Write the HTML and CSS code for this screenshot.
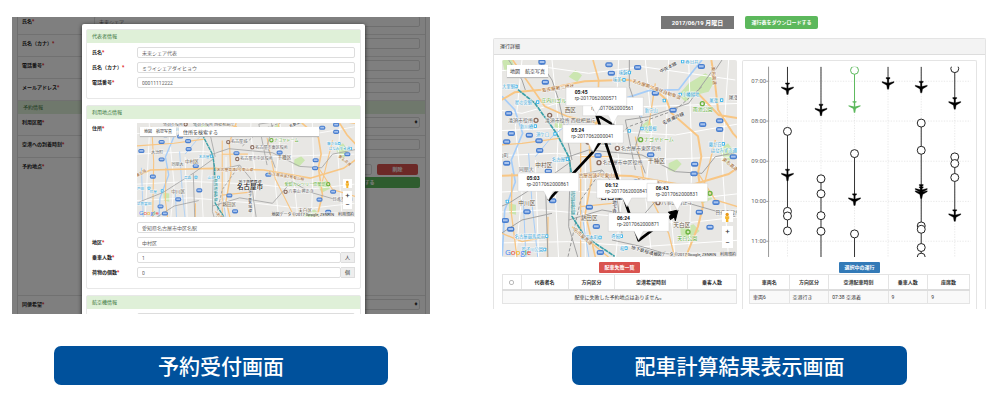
FILE: index.html
```html
<!DOCTYPE html>
<html lang="ja">
<head>
<meta charset="utf-8">
<title>予約受付・配車計算結果</title>
<link rel="stylesheet" href="styles.css">
</head>
<body>
<svg class="defs" aria-hidden="true">
  <defs>
    <g id="shield"><rect x="-11" y="-7" width="22" height="15" rx="6" fill="#4a7fcf"/><rect x="-7" y="-3" width="14" height="6" fill="#a9c4ee"/></g>
    <g id="stop"><rect x="-5" y="-6" width="10" height="11" rx="2" fill="#45b9ec"/><rect x="-2" y="-3" width="4" height="5" fill="#fff"/></g>
    <g id="poi"><circle r="6" fill="none" stroke="#8a6a5c" stroke-width="4"/></g>
    <g id="park"><circle r="6" fill="none" stroke="#6cb33f" stroke-width="4"/></g>
    <g id="plane"><path d="M-6-17H6V-14L2-12V-1L18-5V-2L4 6 2 18H-2L-4 6-18-2V-5L-2-1V-12L-6-14Z"/></g>
    <g id="map">
      <rect x="-80" y="-10" width="820" height="620" fill="#e8e7e4"/>
      <g fill="#cbe6b0">
        <path d="M560 70l50-30 30 20-20 35-40 10-30 20-20-20z"/><path d="M420 195l20-15 15 20-20 22z"/>
        <path d="M500 310l25-12 14 14-22 24-18-6z"/><path d="M580 395l40-8 10 30-30 14z"/>
        <path d="M535 505l40-12 18 20-30 24-26-8z"/><path d="M200 50l20-20 20 16-14 20z"/><path d="M20 430l22 4v30l-20-4z"/>
        <path d="M650 270l28-20 20 26-22 40z"/><path d="M158 180l24 4-4 24-20-6z"/><path d="M0 0l30 0 8 24-30 10z"/>
      </g>
      <g fill="none" stroke="#fff" stroke-width="3">
        <path d="M-80 40L120 20 260 40 420 20 700 60M-80 140L60 160 200 120 420 140 720 130M-80 215L160 205 340 215 520 225 720 190M-80 290L160 280 400 300 720 290M-80 400L120 390 360 400 540 420 720 400M-80 460L120 450 360 470 540 490 720 470M-80 550L200 545 420 560 720 540"/>
        <path d="M-40 0L-30 200-50 600M60 0L40 200 60 400 40 600M100 300L110 600M150 0L170 200 160 400 170 600M250 300V600M350 0L340 200 360 400 340 600M430 0L450 200 430 400 450 600M500 0L490 300 520 600M560 0L570 300 560 600M680 0L660 300 680 600"/>
      </g>
      <g fill="none" stroke="#a6cdf8" stroke-width="5">
        <path d="M0 109L38 149 62 220 28 300 40 366 8 451 0 600"/>
        <path d="M358 119L440 92 530 89 568 40 600 0M370 130L420 170"/>
        <path d="M80 280L90 430 108 600M64 420L72 600M238 450L262 600M-60 340L-50 600" stroke-width="3"/>
        <path d="M100 290L150 230 200 190" stroke-width="3"/>
      </g>
      <g fill="none" stroke="#f8c684" stroke-width="6">
        <path d="M-80 140L0 119 38 97 118 89 248 64 378 59 448 79 493 119 508 159 588 229 598 290 588 339 603 439 588 499 548 600"/>
        <path d="M273 0L290 60 286 180 262 250 268 360 250 460 282 600" stroke-width="5"/>
        <path d="M236 240V600M236 290H330M236 440L330 430" stroke-width="4"/>
        <path d="M628 0L638 60 648 149 693 220 740 270M588 100L650 165 740 180"/>
        <path d="M32 0L128 139 198 170 290 190" stroke-width="5"/>
        <path d="M-80 372L-27 348 205 342 388 348 558 378 680 342 740 300"/>
        <path d="M-22 190L-15 320-20 600M30 340L28 460 46 600M138 470L136 600M0 520L60 545 136 530" stroke-width="4"/>
        <path d="M210 500L330 600M400 230L430 380 500 520 520 600M460 70L440 200" stroke-width="4"/>
        <path d="M-80 260L60 250 170 235M640 240L600 400M588 339L640 420 740 450" stroke-width="4"/>
      </g>
      <g fill="none" stroke="#a3a3a3" stroke-width="3">
        <path d="M20 0L60 60 70 90M110 0L150 60 170 120 210 300M382 0V80L420 190 400 260 430 340M640 30L660 0"/>
        <path d="M170 300L260 270 420 285 520 335 600 340 640 290 740 270M208 350L300 330 340 380 360 520"/>
        <path d="M-80 470L20 430 130 360 200 310M200 480L300 450 420 470 490 390 560 430 700 470"/>
        <path d="M205 300L200 500 230 600M400 330L370 180 440 170 560 130 640 20M330 540L420 560 520 590"/>
        <path d="M130 360L138 600M-80 570L60 480 150 460"/>
      </g>
      <path d="M198 590L236 420 300 330M310 260L380 200 520 150 600 80" fill="none" stroke="#999" stroke-width="3" stroke-dasharray="10 6"/>
      <path d="M48 89L98 129 163 219 200 290 208 339 210 469 248 529 338 589" fill="none" stroke="#3ba0a8" stroke-width="5" stroke-dasharray="14 2"/>
      <g>
        <use href="#shield" x="321" y="14"/><use href="#shield" x="328" y="39"/><use href="#shield" x="407" y="22"/><use href="#shield" x="598" y="19"/>
        <use href="#shield" x="130" y="66"/><use href="#shield" x="460" y="99"/><use href="#shield" x="513" y="150"/><use href="#shield" x="20" y="160"/>
        <use href="#shield" x="28" y="220"/><use href="#shield" x="14" y="245"/><use href="#shield" x="82" y="225"/><use href="#shield" x="111" y="242"/><use href="#shield" x="113" y="271"/>
        <use href="#shield" x="14" y="309"/><use href="#shield" x="288" y="286"/><use href="#shield" x="446" y="284"/><use href="#shield" x="578" y="312"/><use href="#shield" x="576" y="341"/>
        <use href="#shield" x="602" y="193"/><use href="#shield" x="653" y="182"/><use href="#shield" x="653" y="208"/><use href="#shield" x="694" y="290"/><use href="#shield" x="405" y="365"/>
        <use href="#shield" x="-18" y="372"/><use href="#shield" x="139" y="333"/><use href="#shield" x="152" y="422"/><use href="#shield" x="75" y="455"/><use href="#shield" x="262" y="441"/>
        <use href="#shield" x="10" y="481"/><use href="#shield" x="26" y="507"/><use href="#shield" x="283" y="499"/><use href="#shield" x="295" y="577"/><use href="#shield" x="592" y="456"/>
        <use href="#shield" x="642" y="427"/><use href="#shield" x="624" y="501"/><use href="#shield" x="-60" y="278"/><use href="#shield" x="120" y="6"/>
        <use href="#stop" x="42" y="80"/><use href="#stop" x="107" y="127"/><use href="#stop" x="382" y="38"/><use href="#stop" x="366" y="60"/><use href="#stop" x="542" y="5"/>
        <use href="#stop" x="487" y="122"/><use href="#stop" x="535" y="104"/><use href="#stop" x="659" y="121"/><use href="#stop" x="420" y="206"/><use href="#stop" x="382" y="213"/>
        <use href="#stop" x="159" y="222"/><use href="#stop" x="100" y="199"/><use href="#stop" x="196" y="298"/><use href="#stop" x="222" y="375"/><use href="#stop" x="140" y="375"/>
        <use href="#stop" x="16" y="425"/><use href="#stop" x="134" y="529"/><use href="#stop" x="128" y="569"/><use href="#stop" x="294" y="533"/><use href="#stop" x="358" y="529"/>
        <use href="#stop" x="372" y="565"/><use href="#stop" x="664" y="252"/><use href="#stop" x="706" y="270"/><use href="#stop" x="-32" y="415"/>
        <use href="#poi" x="102" y="181"/><use href="#poi" x="143" y="166"/><use href="#poi" x="346" y="265"/><use href="#poi" x="291" y="308"/><use href="#poi" x="258" y="246"/><use href="#poi" x="468" y="428"/>
        <use href="#park" x="601" y="131"/><use href="#park" x="416" y="239"/><use href="#park" x="624" y="400"/><use href="#park" x="558" y="516"/>
      </g>
      <g class="map-label">
        <g fill="#6b5a45" font-size="17">
          <text x="188" y="156">西区</text><text x="100" y="321">中村区</text><text x="49" y="434">中川区</text><text x="438" y="309">千種区</text>
          <text x="514" y="502">天白区</text><text x="236" y="479">熱田区</text>
        </g>
        <g fill="#666" font-size="15">
          <text x="18" y="186">清須市役所</text><text x="128" y="187">清須市役所 西枇杷島庁</text><text x="357" y="270">名古屋市東区役所</text><text x="302" y="313">名古屋市中区役所</text>
          <text x="268" y="251">名古屋城</text><text x="50" y="334">同朋大</text><text x="-25" y="291">大治町</text><text x="478" y="433">八事山 興正寺</text><text x="640" y="462">日進市役所</text><text x="680" y="117">尾張旭市</text>
        </g>
        <g fill="#5fae3a" font-size="15">
          <text x="118" y="127">庄内川ゴルフ</text><text x="426" y="244">ナゴヤドーム</text><text x="572" y="153">雨池公園</text><text x="464" y="405">愛知カンツリー倶楽部</text><text x="526" y="539">天白公園</text>
        </g>
        <g fill="#39a9dc" font-size="13">
          <text x="0" y="85">大里駅</text><text x="38" y="133">星の宮駅</text><text x="350" y="42">味鋺</text><text x="332" y="64">味美</text><text x="550" y="10">春日井</text><text x="540" y="109">小幡緑地</text>
          <text x="428" y="156">新守山</text><text x="425" y="211">大曽根</text><text x="54" y="204">新川橋</text><text x="102" y="227">須ケ口</text><text x="150" y="303">名古屋</text><text x="182" y="380">山王</text>
          <text x="96" y="380">烏森</text><text x="38" y="534">名古屋競馬場前</text><text x="58" y="573">荒子川公園</text><text x="236" y="538">堀田本町</text><text x="328" y="534">呼続</text><text x="354" y="570">桜</text>
          <text x="620" y="257">藤が丘</text><text x="626" y="275">はなみずき通</text><text x="-76" y="420">戸田</text><text x="-30" y="434">伏屋</text><text x="-76" y="476">近鉄富田</text><text x="622" y="126">尾張</text>
        </g>
        <g fill="#a0672e" font-size="14">
          <text x="120" y="96" transform="rotate(-8 120 96)">名古屋第二環状</text><text x="390" y="66" transform="rotate(20 390 66)">名古屋第二環状自動車道</text>
          <text x="216" y="350">名古屋高速2号東山線</text><text x="404" y="364" transform="rotate(10 404 364)">名古屋高速2号東山線</text>
          <text x="628" y="20" transform="rotate(84 628 20)">東名高速</text><text x="660" y="300" transform="rotate(38 660 300)">東名高速</text><text x="-76" y="374" transform="rotate(-30 -76 374)">東名阪</text>
          <text x="214" y="510" transform="rotate(42 214 510)">名古屋高速</text>
        </g>
        <g fill="#333" font-size="14">
          <text x="476" y="40" transform="rotate(-28 476 40)">中央本線</text><text x="484" y="194" transform="rotate(-24 484 194)">名鉄瀬戸線</text><text x="338" y="420" writing-mode="tb">地下鉄名城線</text>
          <text x="296" y="396">地下鉄鶴舞線</text><text x="386" y="566" transform="rotate(16 386 566)">地下鉄桜通線</text>
        </g>
        <text x="213" y="380" writing-mode="tb" fill="#208a92" font-size="14">東海道新幹線</text>
        <text x="290" y="418" fill="#222" font-size="24" font-weight="500">名古屋市</text>
      </g>
    </g>
  </defs>
</svg>

<main class="page">
  <figure class="figure">
    <div class="booking">
      <form class="behind">
        <div class="row"><label for="b1">氏名<b>*</b></label><input id="b1" value="未来シェア"></div>
        <div class="row"><label for="b2">氏名（カナ）<b>*</b></label><input id="b2"></div>
        <div class="row"><label for="b3">電話番号<b>*</b></label><input id="b3"></div>
        <div class="row"><label for="b4">メールアドレス<b>*</b></label><input id="b4"></div>
        <h2 class="bar">予約情報</h2>
        <div class="row"><label for="b5">利用区間<b>*</b></label><span class="select-wrap"><select id="b5"><option></option></select></span></div>
        <div class="row"><label for="b6">空港への到着時刻<b>*</b></label><input id="b6"></div>
        <div class="row place">
          <label for="b7">予約地点<b>*</b></label>
          <div class="place-box">
            <div class="place-line"><input id="b7"><button type="button" class="remove">削除</button></div>
            <button type="button" class="add">予約地点を追加する</button>
          </div>
        </div>
        <div class="row last"><label for="b8">同便希望<b>*</b></label><span class="select-wrap"><select id="b8"><option></option></select></span></div>
      </form>
      <div class="shade"></div>
      <form class="modal">
        <section class="card">
          <h2 class="bar">代表者情報</h2>
          <div class="fields">
            <label for="m1">氏名<b>*</b></label><input id="m1" value="未来シェア代表">
            <label for="m2">氏名（カナ）<b>*</b></label><input id="m2" value="ミライシェアダイヒョウ">
            <label for="m3">電話番号<b>*</b></label><input id="m3" value="00011112222">
          </div>
        </section>
        <section class="card">
          <h2 class="bar">利用地点情報</h2>
          <div class="fields">
            <label for="m4">住所<b>*</b></label>
            <div>
              <div class="map map-small">
                <svg viewBox="-76 176 798 345" role="img" aria-label="地図"><use href="#map"/></svg>
                <div class="map-top"><div class="map-type"><button type="button">地図</button><button type="button">航空写真</button></div><input class="search" aria-label="住所を検索する" value="住所を検索する"></div>
                <div class="map-side">
                  <button type="button" aria-label="ストリートビュー"><svg viewBox="0 0 10 12"><circle cx="5" cy="3" r="2" fill="#e79a1c"/><path d="M2.500 5h5v3l-1 .5V12h-3V8.500l-1-.5z" fill="#f6b62d"/></svg></button>
                  <div class="zoom"><button type="button">+</button><button type="button">−</button></div>
                </div>
                <div class="google"><i>G</i><i>o</i><i>o</i><i>g</i><i>l</i><i>e</i></div>
                <div class="credit"><span>地図データ ©2017 Google, ZENRIN</span><a href="#">利用規約</a></div>
              </div>
              <input id="m4" value="愛知県名古屋市中区名駅">
            </div>
            <label for="m5">地区<b>*</b></label><input id="m5" value="中村区">
            <label for="m6">乗車人数<b>*</b></label><div class="group"><input id="m6" value="1"><span>人</span></div>
            <label for="m7">荷物の個数<b>*</b></label><div class="group"><input id="m7" value="0"><span>個</span></div>
          </div>
        </section>
        <section class="card">
          <h2 class="bar">航空機情報</h2>
          <div class="fields"><span></span><input aria-label="航空会社"></div>
        </section>
      </form>
    </div>
    <figcaption class="caption">予約受付画面</figcaption>
  </figure>

  <figure class="figure">
    <div class="dispatch">
      <div class="tools"><span class="date">2017/06/19 月曜日</span><button type="button" class="download">運行表をダウンロードする</button></div>
      <section class="panel">
        <h2 class="panel-head">運行詳細</h2>
        <div class="panel-body">
          <div class="left">
            <div class="map map-large">
              <svg viewBox="0 0 705 592" role="img" aria-label="運行ルートの地図">
                <use href="#map"/>
                <path d="M139 421L273 276 333 194 283 164 375 441 410 541 515 462" fill="none" stroke="#000" stroke-width="8" stroke-linejoin="round"/>
                <path d="M528 450L498 457 508 464 505 479 517 471 520 482Z" stroke="#000" stroke-width="3"/>
                <g class="callout">
                  <g transform="translate(333 194)"><path d="M-91-82H91V-27H14L0 0-14-27H-91Z"/><text x="-65" y="-44">rp-2017062000561</text></g>
                  <g transform="translate(283 164)"><path d="M-91-82H91V-27H14L0 0-14-27H-91Z"/><text x="-65" y="-61" class="time">05:45</text><text x="-65" y="-43">rp-2017062000571</text></g>
                  <g transform="translate(273 276)"><path d="M-91-82H91V-27H14L0 0-14-27H-91Z"/><text x="-65" y="-61" class="time">05:24</text><text x="-65" y="-43">rp-2017062000041</text></g>
                  <g transform="translate(139 421)"><path d="M-91-82H91V-27H14L0 0-14-27H-91Z"/><text x="-65" y="-61" class="time">05:03</text><text x="-65" y="-43">rp-2017062000861</text></g>
                  <g transform="translate(375 441)"><path d="M-91-82H91V-27H14L0 0-14-27H-91Z"/><text x="-65" y="-61" class="time">06:12</text><text x="-65" y="-43">rp-2017062000841</text></g>
                  <g transform="translate(526 452)"><path d="M-91-82H91V-27H14L0 0-14-27H-91Z"/><text x="-65" y="-61" class="time">06:43</text><text x="-65" y="-43">rp-2017062000831</text></g>
                  <g transform="translate(410 541)"><path d="M-91-82H91V-27H14L0 0-14-27H-91Z"/><text x="-65" y="-61" class="time">06:24</text><text x="-65" y="-43">rp-2017062000871</text></g>
                </g>
              </svg>
              <div class="map-top"><div class="map-type"><button type="button">地図</button><button type="button">航空写真</button></div></div>
              <div class="map-side">
                <button type="button" aria-label="ストリートビュー"><svg viewBox="0 0 10 12"><circle cx="5" cy="3" r="2" fill="#e79a1c"/><path d="M2.500 5h5v3l-1 .5V12h-3V8.500l-1-.5z" fill="#f6b62d"/></svg></button>
                <div class="zoom"><button type="button">+</button><button type="button">−</button></div>
              </div>
              <div class="google"><i>G</i><i>o</i><i>o</i><i>g</i><i>l</i><i>e</i></div>
              <div class="credit"><span>地図データ ©2017 Google, ZENRIN</span><a href="#">利用規約</a></div>
            </div>
            <h3 class="tag red">配車失敗一覧</h3>
            <table class="grid">
              <colgroup><col class="c8"><col class="c20"><col class="c20"><col class="c31"><col></colgroup>
              <thead><tr><th><input type="checkbox" aria-label="すべて選択"></th><th>代表者名</th><th>方向区分</th><th>空港希望時刻</th><th>乗客人数</th></tr></thead>
              <tbody><tr><td colspan="5" class="empty">配車に失敗した予約地点はありません。</td></tr></tbody>
            </table>
          </div>
          <div class="right">
            <svg class="chart" viewBox="0 0 702 592" role="img" aria-label="運行スケジュール">
              <clipPath id="plot"><rect x="0" y="17" width="702" height="574"/></clipPath>
              <g stroke="#ddd" stroke-width="2" stroke-dasharray="4 4" fill="none">
                <path d="M77 61H686M77 181H686M77 302H686M77 423H686M77 543H686"/>
                <path d="M134 17V591M235 17V591M336 17V591M437 17V591M537 17V591M638 17V591"/>
              </g>
              <path d="M77 17V591M70 61H77M70 181H77M70 302H77M70 423H77M70 543H77" stroke="#999" stroke-width="3" fill="none"/>
              <g class="hours"><text x="70" y="67">07:00</text><text x="70" y="187">08:00</text><text x="70" y="308">09:00</text><text x="70" y="429">10:00</text><text x="70" y="549">11:00</text></g>
              <g clip-path="url(#plot)">
                <path d="M134 17V83M134 212V512M235 17V147M235 355V513M336 279V417M336 521V591M437 17V67M537 17V78M537 187V591M638 23V127M638 289V465M235 513V591" stroke="#333" stroke-width="3" fill="none"/>
                <path d="M336 28V138" stroke="#5cb85c" stroke-width="3"/>
                <g fill="#fff" stroke="#222" stroke-width="3">
                  <circle cx="134" cy="212" r="12"/><circle cx="134" cy="453" r="12"/><circle cx="134" cy="467" r="12"/><circle cx="134" cy="512" r="12"/>
                  <circle cx="235" cy="355" r="12"/><circle cx="235" cy="400" r="12"/><circle cx="235" cy="466" r="12"/><circle cx="235" cy="513" r="12"/>
                  <circle cx="336" cy="28" r="12" stroke="#5cb85c"/><circle cx="336" cy="279" r="12"/><circle cx="336" cy="521" r="12"/>
                  <circle cx="537" cy="187" r="12"/><circle cx="537" cy="269" r="12"/><circle cx="537" cy="497" r="12"/><circle cx="537" cy="507" r="12"/><circle cx="537" cy="562" r="12"/><circle cx="537" cy="591" r="12"/>
                  <circle cx="638" cy="23" r="12"/><circle cx="638" cy="289" r="12"/><circle cx="638" cy="309" r="12"/><circle cx="638" cy="351" r="12"/>
                </g>
                <g stroke="#000" stroke-width="1">
                  <use href="#plane" x="134" y="83"/><use href="#plane" x="134" y="343"/><use href="#plane" x="235" y="147"/><use href="#plane" x="336" y="417"/>
                  <use href="#plane" x="437" y="67"/><use href="#plane" x="537" y="78"/><use href="#plane" x="537" y="389"/><use href="#plane" x="537" y="396"/>
                  <use href="#plane" x="638" y="127"/><use href="#plane" x="638" y="465"/>
                </g>
                <use href="#plane" x="336" y="138" fill="#5cb85c"/>
              </g>
            </svg>
            <h3 class="tag blue">選択中の運行</h3>
            <table class="grid inset">
              <colgroup><col class="c18"><col class="c18"><col class="c27"><col class="c18"><col></colgroup>
              <thead><tr><th>車両名</th><th>方向区分</th><th>空港配車時刻</th><th>乗車人数</th><th>座席数</th></tr></thead>
              <tbody><tr><td>車両6</td><td>空港行き</td><td>07:38 空港着</td><td>9</td><td>9</td></tr></tbody>
            </table>
          </div>
        </div>
      </section>
    </div>
    <figcaption class="caption wide">配車計算結果表示画面</figcaption>
  </figure>
</main>
</body>
</html>
```
FILE: styles.css
```css
* { box-sizing: border-box; }
body { margin: 0; background: #fff; color: #333; font: 5px/7px Roboto, "Noto Sans CJK JP", sans-serif; }
figure { margin: 0; }
h2, h3 { margin: 0; font-size: 5px; font-weight: 400; }
input, select, button { font: inherit; color: inherit; margin: 0; min-width: 0; }
button { border: 0; padding: 0; background: none; white-space: nowrap; }
label { font-weight: 700; color: #222; white-space: nowrap; }
label b { color: #e02020; }
.defs { position: absolute; width: 0; height: 0; }

.page { display: grid; grid-template-columns: 418fr 493fr; gap: 63px; padding: 16px 14px 15px 12px; }
.figure { display: flex; flex-direction: column; min-width: 0; }
.caption { align-self: center; width: 80%; margin-top: auto; padding: 4px 0 5px; border-radius: 7px; background: #00519c; color: #fff; text-align: center; font: 500 21px/30px "Noto Sans CJK JP", sans-serif; }
.caption.wide { width: 68%; }

/* booking form with its dialog */
.booking { position: relative; overflow: hidden; margin: 1px 0 32px; padding: 0 4px 0 5px; background: #fff; }
.behind { margin-top: -4px; border: 1px solid #ddd; border-top: 0; border-bottom: 0; }
.row { display: grid; grid-template-columns: 72px 1fr; min-height: 22px; padding: 3px 5px 0 4px; border-bottom: 1px solid #e2e2e2; align-items: start; }
.row label { padding-top: 2px; }
.row.place { min-height: 138px; }
.row.last { min-height: 18px; border-bottom: 0; }
.bar { padding: 3px 5px; background: #dff0d8; color: #3c763d; }
.booking input, .booking select { display: block; width: 100%; height: 11px; padding: 0 4px; border: 1px solid #ddd; border-radius: 2px; background: #fff; color: #666; appearance: none; }
.select-wrap { position: relative; }
.select-wrap::after { content: "♦"; position: absolute; right: 2px; top: 2px; font-size: 4px; }
.place-box { padding-top: 3px; }
.place-line { display: grid; grid-template-columns: 1fr 41px; gap: 5px; padding-right: 2px; margin-bottom: 2px; }
.remove, .add { height: 11px; border-radius: 2px; color: #fff; font-weight: 700; }
.remove { background: #d9534f; }
.add { width: 100%; padding-left: 190px; background: #5cb85c; }
.shade { position: absolute; inset: 0; background: rgba(0, 0, 0, .5); }
.modal { position: absolute; top: 7px; left: 70px; right: 65px; padding: 5px 4px 0; border-radius: 2px 2px 0 0; background: #fff; box-shadow: 0 1px 4px #222; }
.card { margin-bottom: 6px; border: 1px solid #e8e8e8; border-radius: 2px; }
.fields { display: grid; grid-template-columns: 46px 1fr; row-gap: 4px; padding: 4px 5px 10px 4px; }
.fields label { padding: 2px 0 0 1px; }
.group { display: grid; grid-template-columns: 1fr 14px; }
.group span { border: 1px solid #ddd; border-left: 0; background: #eee; text-align: center; line-height: 9px; }

/* maps */
.map { position: relative; overflow: hidden; }
.map > svg { display: block; width: 100%; height: auto; }
.map-small { margin-bottom: 5px; }
.map-large { border-radius: 2px; }
.map-label { font-family: "Noto Sans CJK JP", sans-serif; }
.map-label text { paint-order: stroke; stroke: #fff; stroke-width: 3px; stroke-opacity: .7; }
.map-top { position: absolute; top: 4px; left: 3px; right: 36px; display: flex; gap: 3px; }
.map-type { display: flex; gap: 4px; padding: 1px 4px; background: #fff; box-shadow: 0 1px 1px #bbb; font-size: 4px; }
.booking input.search { flex: 1; height: 9px; border: 0; border-radius: 0; color: #444; box-shadow: 0 1px 1px #bbb; }
.map-side { position: absolute; right: 3px; bottom: 8px; width: 9px; display: grid; gap: 3px; }
.map-side button { display: block; width: 100%; height: 9px; background: #fff; font-size: 8px; line-height: 8px; }
.map-side svg { display: block; height: 8px; margin: auto; }
.google { position: absolute; left: 2px; bottom: 0; font: 500 6px/8px "Open Sans", sans-serif; }
.google i { font-style: normal; color: #4285f4; }
.google i:nth-child(2), .google i:nth-child(6) { color: #ea4335; }
.google i:nth-child(3) { color: #f4b400; }
.google i:nth-child(5) { color: #34a853; }
.credit { position: absolute; right: 1px; bottom: 0; display: flex; gap: 4px; padding-left: 1px; background: rgba(245, 245, 245, .6); font-size: 4px; line-height: 5px; }
.credit a { color: inherit; text-decoration: none; }
.map-large .map-top { top: 5px; left: 5px; }
.map-large .map-type { padding: 2px 3px; gap: 5px; font-size: 5px; line-height: 8px; }
.map-large .map-side { right: 4px; bottom: 9px; width: 11px; gap: 4px; }
.map-large .map-side button { height: 11px; line-height: 10px; }
.map-large .map-side svg { height: 10px; }
.map-large .google { left: 3px; bottom: 1px; font-size: 8px; }
.callout path { fill: #fff; stroke: #bbb; stroke-width: 1px; }
.callout text { font-size: 15px; fill: #444; }
.callout .time { font-weight: 700; fill: #111; }

/* dispatch result */
.tools { display: flex; justify-content: center; gap: 11px; margin-bottom: 9px; }
.date, .download { width: 73px; height: 13px; color: #fff; font-weight: 700; text-align: center; line-height: 13px; }
.date { background: #777; font-size: 6px; }
.download { border-radius: 2px; background: #5cb85c; }
.panel { border: 1px solid #e4e4e4; border-bottom: 0; border-radius: 2px 2px 0 0; }
.panel-head { padding: 4px 6px; border-bottom: 1px solid #ddd; background: #f3f3f3; }
.panel-body { display: grid; grid-template-columns: 1fr 1fr; gap: 5px; padding: 5px 8px 0; }
.right { border: 1px solid #e4e4e4; border-bottom: 0; border-radius: 2px 2px 0 0; padding-bottom: 5px; }
.chart { display: block; width: 100%; height: auto; }
.hours { font-size: 18px; fill: #666; text-anchor: end; }
.tag { width: fit-content; margin: 5px auto 1px; padding: 2px 5px; border-radius: 1px; color: #fff; font-weight: 700; }
.tag.red { background: #d9534f; }
.tag.blue { background: #337ab7; }
.grid { width: 100%; table-layout: fixed; border-collapse: collapse; border: 1px solid #ddd; }
.grid.inset { width: calc(100% - 12px); margin: 0 6px; }
.grid th { height: 15px; padding: 0; border: 1px solid #e4e4e4; border-bottom: 2px solid #ddd; font-weight: 700; }
.grid td { height: 14px; padding: 0 3px; border: 1px solid #e4e4e4; background: #f9f9f9; }
.grid td.empty { text-align: center; }
.grid input { display: block; width: 5px; height: 5px; margin: auto; border: 1px solid #bbb; border-radius: 2px; appearance: none; }
.c8 { width: 8%; }
.c18 { width: 18%; }
.c20 { width: 20%; }
.c27 { width: 27%; }
.c31 { width: 31%; }
```
